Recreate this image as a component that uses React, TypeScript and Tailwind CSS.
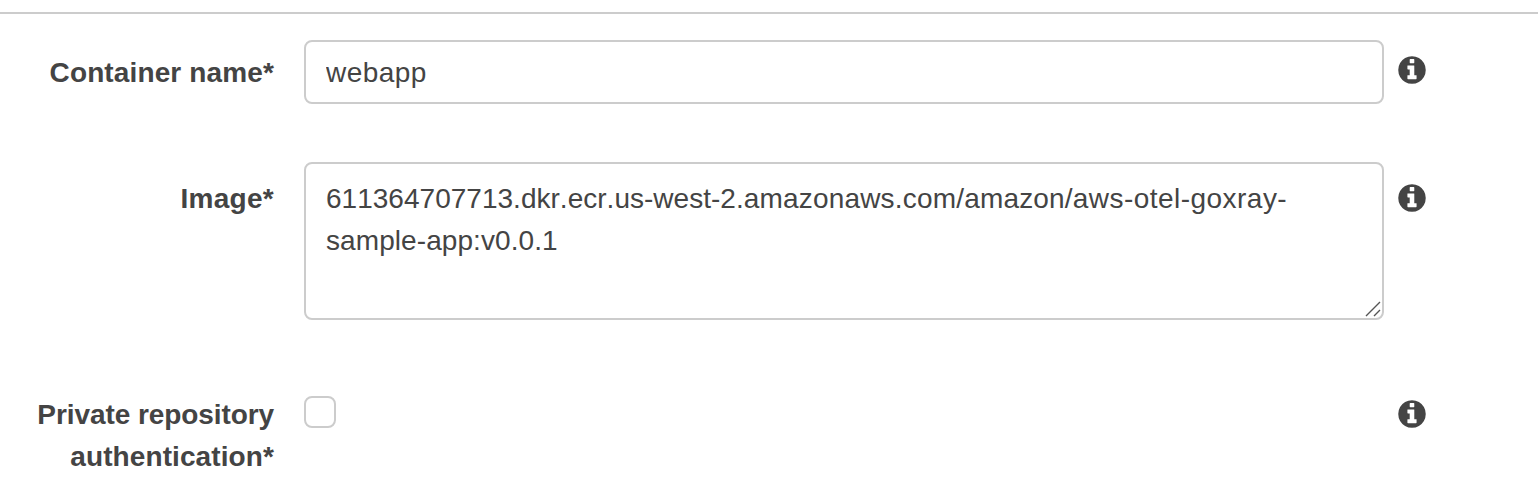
function Info({ className }: { className: string }) {
  return (
    <svg className={`size-7 shrink-0 fill-[#444] ${className}`} viewBox="-14 114 1564 1564" aria-label="Information">
      <path d="M1024 1376v-160q0-14-9-23t-23-9h-96v-512q0-14-9-23t-23-9h-320q-14 0-23 9t-9 23v160q0 14 9 23t23 9h96v320h-96q-14 0-23 9t-9 23v160q0 14 9 23t23 9h448q14 0 23-9t9-23zm-128-896v-160q0-14-9-23t-23-9h-192q-14 0-23 9t-9 23v160q0 14 9 23t23 9h192q14 0 23-9t9-23zm640 416q0 209-103 385.5t-279.5 279.5-385.5 103-385.5-103-279.5-279.5-103-385.5 103-385.5 279.5-279.5 385.5-103 385.5 103 279.5 279.5 103 385.5z" />
    </svg>
  );
}

const label = "w-[274px] shrink-0 text-right text-[28px] leading-[42px] font-bold text-[#444]";

export default function App() {
  return (
    <main className="h-[502px] w-[1538px] overflow-hidden bg-white pt-3 font-['Liberation_Sans',Arial,sans-serif] text-[#444]">
      <div className="h-0.5 bg-[#ccc]" />
      <div className="mt-[26px] flex h-[64px] items-start">
        <label htmlFor="name" className={`${label} mt-3 tracking-[0.13px]`}>Container name*</label>
        <input id="name" defaultValue="webapp" className="ml-[30px] h-[64px] w-[1080px] rounded-lg border-2 border-[#ccc] px-5 pt-0.5 text-[28px] tracking-[0.45px] outline-none" />
        <Info className="mt-4 ml-3.5" />
      </div>
      <div className="mt-[58px] flex h-[158px] items-start">
        <label htmlFor="image" className={`${label} mt-4 tracking-[0.3px]`}>Image*</label>
        <div className="relative ml-[30px] h-[158px] w-[1080px]">
          <div id="image" role="textbox" aria-multiline="true" contentEditable suppressContentEditableWarning spellCheck={false} className="size-full overflow-hidden rounded-lg border-2 border-[#ccc] px-5 py-3.5 text-[28px] leading-[42px] outline-none [font-kerning:none]">
            <div className="whitespace-nowrap"><span className="tracking-[0.02px]">611364707713.dkr.ecr.us-west-2.</span><span className="tracking-[0.18px]">amazonaws.com/amazon/</span><span className="tracking-[0.46px]">aws-otel-goxray-</span></div>
            <div className="tracking-[0.08px]">sample-app:v0.0.1</div>
          </div>
          <svg className="absolute right-[3px] bottom-[3px] size-4" viewBox="0 0 16 16" fill="none" stroke="#555" strokeWidth="1.4"><path d="M1 15 15 1M9 15l6-6" /></svg>
        </div>
        <Info className="mt-[22px] ml-3.5" />
      </div>
      <div className="mt-[74px] flex items-start">
        <label htmlFor="auth" className={label}>
          <span className="block tracking-[-0.08px]">Private repository</span>
          <span className="block tracking-[0.1px]">authentication*</span>
        </label>
        <div className="ml-[30px] w-[1080px] pt-0.5">
          <input id="auth" type="checkbox" className="block size-8 appearance-none rounded-lg border-2 border-[#ccc]" />
        </div>
        <Info className="mt-1.5 ml-3.5" />
      </div>
    </main>
  );
}
